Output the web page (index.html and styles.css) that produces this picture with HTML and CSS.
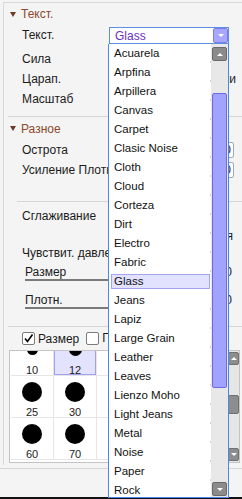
FILE: index.html
```html
<!DOCTYPE html>
<html lang="ru">
<head>
    <meta charset="utf-8">
    <title>Текстура кисти</title>
    <link rel="stylesheet" href="styles.css">
</head>
<body>
<div class="page">
    <div class="panel">
        <!-- Текст. -->
        <section class="group group-text">
            <div class="group-head"><span class="arrow"></span>Текст.</div>
            <div class="row row-select">
                <span class="label">Текст.</span>
                <div class="select"><span>Glass</span><span class="select-btn"><i class="tri-down"></i></span></div>
            </div>
            <div class="row"><span class="label">Сила</span></div>
            <div class="row"><span class="label">Царап.</span><span class="aside">Царапини</span></div>
            <div class="row"><span class="label">Масштаб</span></div>
        </section>

        <!-- Разное -->
        <section class="group group-misc">
            <div class="group-head"><span class="arrow"></span>Разное</div>
            <div class="row"><span class="label">Острота</span><span class="spin">0</span></div>
            <div class="row"><span class="label">Усиление Плотн.</span><span class="spin">0</span></div>
            <div class="subline"></div>
            <div class="row row-smooth"><span class="label">Сглаживание</span></div>
            <div class="row row-aside"><span class="aside aside-press">Нажатия</span></div>
            <div class="row row-press"><span class="label">Чувствит. давления</span></div>
            <div class="slider">
                <div class="slider-top"><span>Размер</span><span>0</span></div>
                <div class="slider-line"></div>
            </div>
            <div class="slider">
                <div class="slider-top"><span>Плотн.</span><span>0</span></div>
                <div class="slider-line"></div>
            </div>
        </section>

        <!-- кисти -->
        <section class="group group-brush">
            <div class="check-row">
                <span class="check">
                    <svg width="11" height="11" viewBox="0 0 11 11"><path d="M2 5.5 L4.5 8.5 L9.5 1.5" fill="none" stroke="#000" stroke-width="1.6"/></svg>
                </span>
                <span>Размер</span>
                <span class="check check-2"></span>
                <span class="check-cut">Плотн.</span>
            </div>
            <div class="grid-box">
                <div class="cells">
                    <div class="cells-inner">
                        <div class="cell"><div class="dot-box"><span class="dot" style="width:11px;height:11px"></span></div><div class="num">10</div></div>
                        <div class="cell current"><div class="dot-box"><span class="dot" style="width:13px;height:13px"></span></div><div class="num">12</div></div>
                        <div class="cell"><div class="dot-box"><span class="dot" style="width:15px;height:15px"></span></div><div class="num"></div></div>
                        <div class="cell"><div class="dot-box"><span class="dot" style="width:17px;height:17px"></span></div><div class="num"></div></div>
                        <div class="cell"><div class="dot-box"><span class="dot" style="width:19px;height:19px"></span></div><div class="num"></div></div>
                        <div class="cell"><div class="dot-box"><span class="dot" style="width:20px;height:20px"></span></div><div class="num">25</div></div>
                        <div class="cell"><div class="dot-box"><span class="dot" style="width:20px;height:20px"></span></div><div class="num">30</div></div>
                        <div class="cell"><div class="dot-box"><span class="dot" style="width:20px;height:20px"></span></div><div class="num"></div></div>
                        <div class="cell"><div class="dot-box"><span class="dot" style="width:20px;height:20px"></span></div><div class="num"></div></div>
                        <div class="cell"><div class="dot-box"><span class="dot" style="width:20px;height:20px"></span></div><div class="num"></div></div>
                        <div class="cell"><div class="dot-box"><span class="dot" style="width:20px;height:20px"></span></div><div class="num">60</div></div>
                        <div class="cell"><div class="dot-box"><span class="dot" style="width:20px;height:20px"></span></div><div class="num">70</div></div>
                        <div class="cell"><div class="dot-box"><span class="dot" style="width:20px;height:20px"></span></div><div class="num"></div></div>
                        <div class="cell"><div class="dot-box"><span class="dot" style="width:20px;height:20px"></span></div><div class="num"></div></div>
                        <div class="cell"><div class="dot-box"><span class="dot" style="width:20px;height:20px"></span></div><div class="num"></div></div>
                    </div>
                </div>
                <div class="gscroll">
                    <span class="gbtn"><i class="tri-up"></i></span>
                    <span class="gthumb"></span>
                    <span class="gbtn gbtn-down"><i class="tri-down"></i></span>
                </div>
            </div>
        </section>
    </div>
    <div class="status"></div>

    <!-- выпадающий список -->
    <div class="dropdown">
        <ul class="options">
            <li class="option">Acuarela</li>
            <li class="option">Arpfina</li>
            <li class="option">Arpillera</li>
            <li class="option">Canvas</li>
            <li class="option">Carpet</li>
            <li class="option">Clasic Noise</li>
            <li class="option">Cloth</li>
            <li class="option">Cloud</li>
            <li class="option">Corteza</li>
            <li class="option">Dirt</li>
            <li class="option">Electro</li>
            <li class="option">Fabric</li>
            <li class="option current">Glass</li>
            <li class="option">Jeans</li>
            <li class="option">Lapiz</li>
            <li class="option">Large Grain</li>
            <li class="option">Leather</li>
            <li class="option">Leaves</li>
            <li class="option">Lienzo Moho</li>
            <li class="option">Light Jeans</li>
            <li class="option">Metal</li>
            <li class="option">Noise</li>
            <li class="option">Paper</li>
            <li class="option">Rock</li>
        </ul>
        <div class="list-scroll">
            <span class="sbtn"><i class="tri-up"></i></span>
            <span class="sthumb"></span>
            <span class="sbtn sbtn-down"><i class="tri-down"></i></span>
        </div>
    </div>
</div>
</body>
</html>
```

FILE: styles.css
```css
* {margin: 0; padding: 0; box-sizing: border-box;}
body {font: 12px/1 "Liberation Sans", Arial, sans-serif; color: #1b1b1b; background: #f4f4f4; width: 242px; height: 499px; overflow: hidden;}
.page {position: relative; height: 499px; overflow: hidden;}

/*панель*/
.panel {margin: 2px 0 0 3px; border-top: 1px solid #d9d9d9; border-left: 1px solid #d9d9d9; padding-bottom: 2px;}
.group {margin-left: 4px; border-bottom: 1px solid #d6d6d6;}
.group-text {padding-bottom: 7px;}
.group-misc {padding-bottom: 17px;}
.group-brush {border-bottom: 0;}

.group-head {height: 22px; display: flex; align-items: center; padding-left: 2px; color: #8a4a2b;}
.group-misc .group-head {height: 23px;}
.arrow {width: 0; height: 0; border-left: 3.5px solid transparent; border-right: 3.5px solid transparent; border-top: 5px solid #6e3a1e; margin-right: 5px;}

.row {height: 20px; display: flex; align-items: center; padding-left: 14px; padding-right: 6px; white-space: nowrap;}
.row-select {height: 24px; align-items: flex-start; padding-top: 2px;}
.row-select .label {line-height: 17px; width: 87px;}
.label {width: 86px; flex-shrink: 0; overflow: hidden; line-height: 15px;}
.aside {margin-left: auto;}
.aside-press {margin-right: 3px;}

.select {width: 120px; height: 17px; border: 1px solid #5a8fe4; background: #fff; display: flex; align-items: center; padding-left: 5px; color: #6930c3;}
.select-btn {margin-left: auto; width: 15px; height: 15px; background: #a7a7ff; border: 1px solid #7b7bea; border-radius: 2px; display: flex; align-items: center; justify-content: center;}

.spin {margin-left: auto; margin-right: 2px; width: 34px; height: 16px; border: 1px solid #a9a9a9; border-radius: 2px; background: #fff; text-align: right; padding-right: 2px; line-height: 14px;}

.subline {margin: 21px 0 0 9px; border-top: 1px solid #d6d6d6;}
.row-smooth {margin-top: 5px; height: 18px;}
.row-aside {height: 22px;}
.row-press {height: 12px;}

.slider {margin: 6px 0 0 17px;}
.slider + .slider {margin-top: 12px;}
.slider-top {height: 14px; display: flex; align-items: center; justify-content: space-between; padding-right: 10px;}
.slider-line {height: 2px; background: #7a7a7a; width: 195px;}

/*кисти*/
.check-row {height: 23px; display: flex; align-items: center; padding-left: 14px; white-space: nowrap;}
.check {width: 13px; height: 13px; border: 1px solid #7b7b7b; background: #fff; border-radius: 2px; margin-right: 3px; display: flex; align-items: center; justify-content: center;}
.check-2 {margin-left: 7px;}
.check-cut {width: 8px; overflow: hidden; line-height: 15px;}

.grid-box {margin-left: 1px; width: 231px; height: 113px; border: 1px solid #c4c4c4; display: flex; background: #fff; overflow: hidden;}
.cells {flex: 1; overflow: hidden; padding-left: 1px;}
.cells-inner {margin-top: -17px; display: grid; grid-template-columns: repeat(5, 43px); grid-auto-rows: 42px;}
.cell {border-right: 1px solid #e6e6e6; border-bottom: 1px solid #e6e6e6;}
.cell.current {background: #e3e3ff; box-shadow: inset 0 0 0 1px #a0a0f0;}
.dot-box {height: 31px; display: flex; align-items: center; justify-content: center;}
.dot {display: block; border-radius: 50%; background: #000;}
.num {text-align: center; height: 10px; line-height: 10px; font-size: 11px; color: #222;}

.gscroll {width: 11px; background: #e6e6e6; display: flex; flex-direction: column; padding: 1px 0;}
.gbtn {height: 13px; background: #8d8d8d; border: 1px solid #707070; border-radius: 2px; display: flex; align-items: center; justify-content: center;}
.gthumb {margin-top: 30px; height: 19px; background: #8d8d8d; border: 1px solid #707070; border-radius: 2px;}
.gbtn-down {margin-top: auto;}

.status {margin-top: 3px; height: 31px; border-top: 1px solid #d6d6d6; border-bottom: 2px solid #111;}

/*выпадающий список*/
.dropdown {position: absolute; left: 108px; top: 44px; width: 121px; height: 454px; border: 1px solid #4a88e6; border-top: 0; background: #fff; display: flex; overflow: hidden; z-index: 5;}
.options {flex: 1; list-style: none; font-size: 11.5px; color: #111;}
.option {height: 19px; line-height: 19px; padding-left: 5px; position: relative; white-space: nowrap;}
.option::after {content: ""; position: absolute; right: 0; bottom: 0; width: 1px; height: 2px; background: #d4d4d4;}
.option.current {margin: 2px 1px 2px 2px; height: 15px; line-height: 13px; padding-left: 2px; background: #e2e2ff; border: 1px solid #a3a3ef;}
.option.current::after {display: none;}

.list-scroll {width: 17px; background: #e8e8e8; display: flex; flex-direction: column; padding: 3px 1px 1px 1px;}
.sbtn {height: 14px; background: #8b8b8b; border: 1px solid #6a6a6a; border-radius: 2px; display: flex; align-items: center; justify-content: center;}
.sthumb {margin-top: 32px; height: 295px; background: #a2a2ff; border: 1px solid #6b6be4; border-radius: 2px;}
.sbtn-down {margin-top: auto;}

.tri-up {width: 0; height: 0; border-left: 3px solid transparent; border-right: 3px solid transparent; border-bottom: 3px solid #fff;}
.tri-down {width: 0; height: 0; border-left: 3px solid transparent; border-right: 3px solid transparent; border-top: 3px solid #fff;}
```
